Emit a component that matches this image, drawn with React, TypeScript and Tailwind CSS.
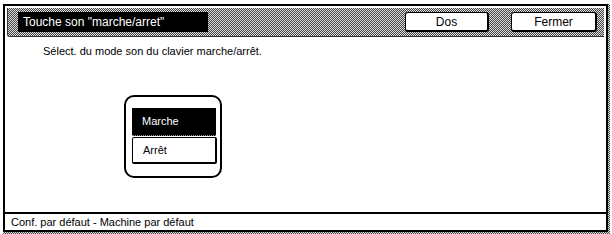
import React from 'react';

const dither = "bg-[repeating-conic-gradient(#4a4a4a_0_25%,#d8d8d8_0_50%)] bg-[length:2px_2px]";

const TopButton: React.FC<{ label: string; width: string }> = ({ label, width }) => (
  <button
    className={`${width} h-[20px] bg-white border border-black border-r-2 border-b-2 rounded-[3px] text-[12px] leading-none text-black flex items-center justify-center`}
  >
    {label}
  </button>
);

export default function App() {
  return (
    <div className="w-[612px] h-[234px] bg-white pt-[4px] pl-[3px] font-['Liberation_Sans',Arial,sans-serif] overflow-hidden">
      {/* outer frame with dithered drop edge */}
      <div className={`w-[607px] h-[230px] pr-[2px] pb-[2px] ${dither}`}>
        <div className="w-[605px] h-[228px] -mt-0 bg-white border-2 border-black flex flex-col">
          {/* title bar */}
          <div className={`mx-[2px] mt-[2px] h-[29px] ${dither} border-l border-b border-[#333] rounded-bl-[3px] flex items-center pl-[10px] pr-[7px]`}>
            <div className="w-[190px] h-[20px] bg-black text-white text-[12px] leading-none flex items-center pl-[5px]">
              Touche son "marche/arret"
            </div>
            <div className="flex-1" />
            <div className="flex items-center gap-[22px]">
              <TopButton label="Dos" width="w-[84px]" />
              <TopButton label="Fermer" width="w-[86px]" />
            </div>
          </div>

          {/* content */}
          <div className="flex-1 flex flex-col pl-[38px] pt-[8px]">
            <p className="text-[11px] leading-[13px] text-black">Sélect. du mode son du clavier marche/arrêt.</p>
            <div className="mt-[37px] ml-[81px] w-[98px] h-[83px] border-2 border-black rounded-[10px] pt-[11px] pl-[6px] flex flex-col">
              <div className="w-[84px] h-[28px] bg-black text-white text-[11px] leading-none flex items-center pl-[10px] border-b border-dotted border-[#888]">
                Marche
              </div>
              <div className="mt-[1px] w-[85px] h-[27px] bg-white text-black text-[11px] leading-none flex items-center pl-[10px] border border-black border-t-dotted border-r-2 border-b-2 rounded-[2px]">
                Arrêt
              </div>
            </div>
          </div>

          {/* footer */}
          <div className="h-[18px] border-t-2 border-black flex items-center pl-[6px] text-[11px] leading-none text-black">
            Conf. par défaut - Machine par défaut
          </div>
        </div>
      </div>
    </div>
  );
}
